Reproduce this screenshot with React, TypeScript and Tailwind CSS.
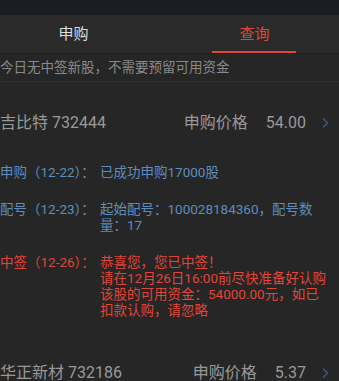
import React from 'react';

const font = { fontFamily: '"Roboto", "Noto Sans CJK SC", sans-serif' };

const Chevron = () => (
  <svg width="8" height="12" viewBox="0 0 8 12" className="ml-[15px]">
    <path d="M2 1.5 L6.5 6 L2 10.5" fill="none" stroke="#3d5878" strokeWidth="1.6" />
  </svg>
);

const StockRow = ({ name, code, price }: { name: string; code: string; price: string }) => (
  <div className="flex items-center justify-between h-[22px] pr-[10px] text-[16px] text-[#999999]">
    <div>
      {name} {code}
    </div>
    <div className="flex items-center">
      <span>申购价格</span>
      <span className="ml-[18px]">{price}</span>
      <Chevron />
    </div>
  </div>
);

const Detail = ({ label, lines, color }: { label: string; lines: string[]; color: string }) => (
  <div className={`flex text-[13.5px] leading-[16px] ${color}`}>
    <div className="w-[100px] shrink-0">{label}</div>
    <div className="flex flex-col">
      {lines.map((l, i) => (
        <div key={i}>{l}</div>
      ))}
    </div>
  </div>
);

export default function App() {
  return (
    <div className="w-[339px] h-[381px] overflow-hidden bg-[#262626]" style={font}>
      <div className="h-[15px] bg-[#1c1d22]" />
      <div className="h-[38px] bg-[#2a2a2a] flex -ml-[17px] w-[362px]">
        <div className="w-[181px] flex items-center justify-center text-[15px] text-[#dedede]">申购</div>
        <div className="w-[181px] relative flex items-center justify-center text-[15px] text-[#e0473b]">
          查询
          <div className="absolute bottom-0 left-[48px] w-[84px] h-[2px] bg-[#e0473b]" />
        </div>
      </div>
      <div className="h-[1px] bg-[#1d1d1d]" />
      <div className="h-[28px] flex items-center text-[13.5px] text-[#8a8a8a] border-b border-[#2d2d2d]">
        今日无中签新股，不需要预留可用资金
      </div>
      <div className="pt-[30px]">
        <StockRow name="吉比特" code="732444" price="54.00" />
      </div>
      <div className="mt-[30px] flex flex-col gap-[21px]">
        <Detail label="申购（12-22）：" lines={['已成功申购17000股']} color="text-[#5d8dbf]" />
        <Detail label="配号（12-23）：" lines={['起始配号：100028184360，配号数', '量：17']} color="text-[#5d8dbf]" />
        <Detail
          label="中签（12-26）："
          lines={['恭喜您，您已中签！', '请在12月26日16:00前尽快准备好认购', '该股的可用资金：54000.00元，如已', '扣款认购，请忽略']}
          color="text-[#e0453a]"
        />
      </div>
      <div className="mt-[44px]">
        <StockRow name="华正新材" code="732186" price="5.37" />
      </div>
    </div>
  );
}
